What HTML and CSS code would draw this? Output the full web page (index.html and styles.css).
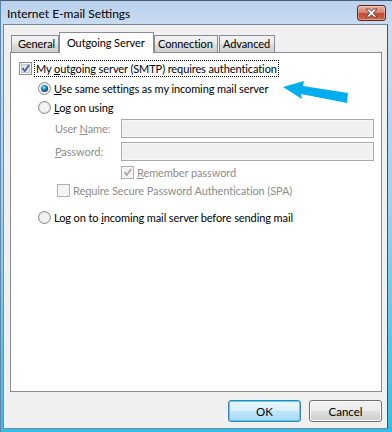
FILE: index.html
```html
<!DOCTYPE html>
<html>
<head>
<meta charset="utf-8">
<link rel="stylesheet" href="styles.css">
</head>
<body>
<div class="window">
  <div class="titlebar">
    <span class="title">Internet E-mail Settings</span>
    <div class="close">
      <svg width="17" height="10" viewBox="0 0 17 10">
        <path d="M3 1 L6.5 1 L8.5 3.3 L10.5 1 L14 1 L10.3 5 L14 9 L10.5 9 L8.5 6.7 L6.5 9 L3 9 L6.7 5 Z" fill="#ffffff" stroke="#5a2a22" stroke-width="0.8" stroke-linejoin="round"/>
      </svg>
    </div>
  </div>
  <div class="client">
    <div class="tabs">
      <div class="tab t-general">General</div>
      <div class="tab active t-outgoing">Outgoing Server</div>
      <div class="tab t-connection">Connection</div>
      <div class="tab t-advanced">Advanced</div>
    </div>
    <div class="panel">
      <div class="row r1">
        <svg class="box" width="13" height="13" viewBox="0 0 13 13">
          <rect x="0.5" y="0.5" width="12" height="12" fill="#f5f5f5" stroke="#8e8f8f"/>
          <rect x="2.5" y="2.5" width="8" height="8" fill="#dfe3ea" stroke="#c3c8d0"/>
          <path d="M2.6 6.4 L4.4 5.6 L5.6 7.8 L9.4 2.4 L10.9 3.4 L5.8 10.6 Z" fill="#4a5e96"/>
        </svg>
        <span class="focus">My <u>o</u>utgoing server (SMTP) requires authentication</span>
      </div>
      <div class="row r2">
        <svg class="radio" width="13" height="13" viewBox="0 0 13 13">
          <defs>
            <radialGradient id="dot" cx="0.4" cy="0.35" r="0.7">
              <stop offset="0" stop-color="#9fe1ff"/>
              <stop offset="0.45" stop-color="#1e8bc4"/>
              <stop offset="1" stop-color="#0b3a61"/>
            </radialGradient>
          </defs>
          <circle cx="6.5" cy="6.5" r="6" fill="#eeeeee" stroke="#8a8d90"/>
          <circle cx="6.5" cy="6.5" r="3.6" fill="url(#dot)"/>
        </svg>
        <span class="label"><u>U</u>se same settings as my incoming mail server</span>
      </div>
      <div class="row r3">
        <svg class="radio" width="13" height="13" viewBox="0 0 13 13">
          <circle cx="6.5" cy="6.5" r="6" fill="#e4e4e4" stroke="#8a8d90"/>
          <circle cx="6.5" cy="6.5" r="4.5" fill="#f2f2f2"/>
        </svg>
        <span class="label"><u>L</u>og on using</span>
      </div>
      <div class="row r4 field">
        <span class="flabel">User <u>N</u>ame:</span>
        <div class="input"></div>
      </div>
      <div class="row r5 field">
        <span class="flabel"><u>P</u>assword:</span>
        <div class="input"></div>
      </div>
      <div class="row r6">
        <svg class="box" width="13" height="13" viewBox="0 0 13 13">
          <rect x="0.5" y="0.5" width="12" height="12" fill="#f4f4f4" stroke="#b1b1b1"/>
          <path d="M2.6 6.4 L4.4 5.6 L5.6 7.8 L9.4 2.4 L10.9 3.4 L5.8 10.6 Z" fill="#a9a9a9"/>
        </svg>
        <span class="label dis"><u>R</u>emember password</span>
      </div>
      <div class="row r7">
        <svg class="box" width="13" height="13" viewBox="0 0 13 13">
          <rect x="0.5" y="0.5" width="12" height="12" fill="#f4f4f4" stroke="#b1b1b1"/>
        </svg>
        <span class="label dis">Re<u>q</u>uire Secure Password Authentication (SPA)</span>
      </div>
      <div class="row r8">
        <svg class="radio" width="13" height="13" viewBox="0 0 13 13">
          <circle cx="6.5" cy="6.5" r="6" fill="#e4e4e4" stroke="#8a8d90"/>
          <circle cx="6.5" cy="6.5" r="4.5" fill="#f2f2f2"/>
        </svg>
        <span class="label">Log on to <u>i</u>ncoming mail server before sending mail</span>
      </div>
    </div>
    <div class="buttons">
      <button class="btn default">OK</button>
      <button class="btn">Cancel</button>
    </div>
  </div>
</div>
<svg class="arrow" width="392" height="432" viewBox="0 0 392 432">
  <polygon points="283,87 304,81 303,86 348,93 347,103 301,94 302,99" fill="#00aeef"/>
</svg>
</body>
</html>
```
FILE: styles.css
```css
html, body {
  margin: 0;
  padding: 0;
}
body {
  position: relative;
  width: 392px;
  height: 432px;
  overflow: hidden;
  font-family: Lato, "Liberation Sans", Arial, sans-serif;
  font-size: 11px;
  letter-spacing: -0.1px;
  color: #000;
  background: #ffffff;
}
u {
  text-decoration: underline;
  text-underline-offset: 1px;
}
.window {
  box-sizing: border-box;
  width: 392px;
  height: 432px;
  padding: 0 4px 3px 2px;
  display: flex;
  flex-direction: column;
  background: linear-gradient(to bottom, #b9d1ee 0px, #cadcf1 24px, #9fd3f0 200px, #33bde9 100%);
  border-top: 1px solid #4b5d73;
  border-left: 1px solid #5d87ad;
}
.titlebar {
  height: 23px;
  display: flex;
  align-items: flex-start;
  justify-content: space-between;
  padding-left: 4px;
  padding-right: 2px;
}
.title {
  font-size: 12px;
  letter-spacing: 0;
  margin-top: 5px;
  color: #000;
}
.close {
  box-sizing: border-box;
  width: 29px;
  height: 16px;
  margin-top: 4px;
  border: 1px solid #5e2419;
  border-radius: 3px;
  background: linear-gradient(to bottom, #e9a99a 0%, #d98672 45%, #c2472f 55%, #cf6b4d 100%);
  box-shadow: inset 0 0 0 1px rgba(255,255,255,0.35);
  display: flex;
  align-items: center;
  justify-content: center;
}
.client {
  flex: 1;
  display: flex;
  flex-direction: column;
  background: #f0f0f0;
  border: 1px solid #7a8a9c;
  border-right-color: #3e4f61;
}
.tabs {
  display: flex;
  align-items: flex-end;
  height: 20px;
  margin-top: 7px;
  padding-left: 7px;
  position: relative;
  z-index: 1;
}
.tab {
  box-sizing: border-box;
  height: 17px;
  border: 1px solid #898c95;
  border-bottom: none;
  background: linear-gradient(to bottom, #f2f2f2 0%, #ebebeb 50%, #dddddd 51%, #cfcfcf 100%);
  padding-left: 6px;
  line-height: 15px;
  white-space: nowrap;
}
.tab.active {
  height: 21px;
  margin-bottom: -1px;
  background: #ffffff;
  padding-left: 7px;
  padding-top: 2px;
}
.t-general { width: 48px; }
.t-outgoing { width: 95px; }
.t-connection { width: 64px; padding-left: 3px; }
.t-advanced { width: 56px; margin-left: 1px; padding-left: 3px; }
.panel {
  box-sizing: border-box;
  height: 340px;
  margin: 0 5px 0 6px;
  border: 1px solid #898c95;
  background: #ffffff;
  display: flex;
  flex-direction: column;
}
.row {
  display: flex;
  align-items: center;
  height: 18px;
}
.box, .radio {
  flex: none;
}
.r1 { margin-top: 6px; padding-left: 8px; }
.r1 .box { margin-right: 2px; margin-top: 1px; }
.focus {
  border: 1px dotted #000;
  padding: 1px 1px 1px 1px;
  line-height: 13px;
}
.r2 { margin-top: 2px; padding-left: 27px; }
.r3 { margin-top: 1px; padding-left: 27px; }
.r2 .radio, .r3 .radio, .r8 .radio { margin-right: 3px; }
.field {
  height: 19px;
  padding-left: 44px;
  padding-right: 7px;
}
.r4 { margin-top: 3px; }
.r5 { margin-top: 4px; }
.flabel {
  width: 66px;
  flex: none;
  color: #8d8d8d;
}
.input {
  flex: 1;
  box-sizing: border-box;
  height: 19px;
  border: 1px solid #a7abb0;
  background: #f0f0f0;
  box-shadow: inset 0 0 0 1px #f7f7f7;
}
.r6 { margin-top: 2px; padding-left: 110px; }
.r7 { margin-top: 0; padding-left: 46px; }
.r6 .box, .r7 .box { margin-right: 3px; }
.dis { color: #8d8d8d; }
.r8 { margin-top: 9px; padding-left: 27px; }
.buttons {
  display: flex;
  justify-content: flex-end;
  gap: 8px;
  margin-top: 8px;
  padding-right: 5px;
}
.btn {
  box-sizing: border-box;
  width: 73px;
  height: 22px;
  margin: 0;
  padding: 0;
  font-family: Lato, "Liberation Sans", Arial, sans-serif;
  font-size: 11.5px;
  color: #000;
  border: 1px solid #707070;
  border-radius: 3px;
  background: linear-gradient(to bottom, #f2f2f2 0%, #ebebeb 50%, #dddddd 51%, #cfcfcf 100%);
  box-shadow: inset 0 0 0 1px #fcfcfc;
}
.btn.default {
  border-color: #3c7fb1;
  background: linear-gradient(to bottom, #eaf6fd 0%, #d9f0fc 50%, #bee6fd 51%, #a7d9f5 100%);
  box-shadow: inset 0 0 0 1px #48d4fc;
}
.arrow {
  position: absolute;
  left: 0;
  top: 0;
  pointer-events: none;
}
```
